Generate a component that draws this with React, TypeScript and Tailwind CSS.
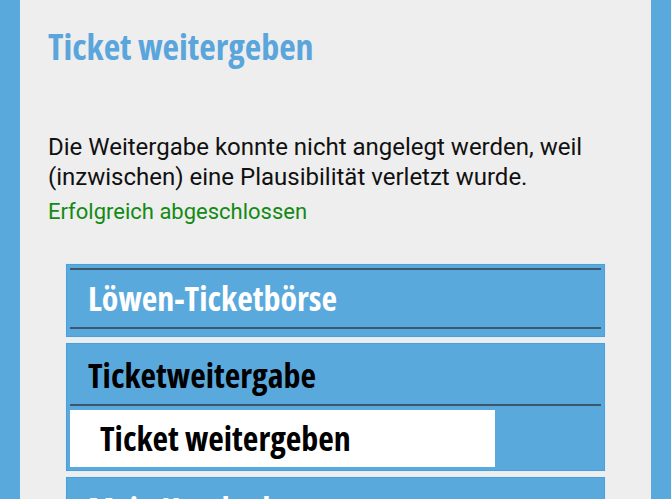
import React from "react";

const headFont = "font-['Open_Sans','DejaVu_Sans_Condensed',sans-serif] [font-stretch:75%] font-bold";

type MenuItem = {
  label: string;
  color: string;
  topLine?: boolean;
  children?: string[];
};

const menu: MenuItem[] = [
  { label: "Löwen-Ticketbörse", color: "text-white", topLine: true },
  { label: "Ticketweitergabe", color: "text-black", children: ["Ticket weitergeben"] },
  { label: "Mein Kundenkonto", color: "text-white" },
];

export default function App() {
  return (
    <div className="h-[499px] overflow-hidden bg-[#5aa9dd] px-5">
      <div className="h-full bg-[#eeeeee] pl-7 pr-7 pt-[27px]">
        <h1 className={`${headFont} text-[36px] leading-[40px] text-[#5aa5dc]`}>Ticket weitergeben</h1>

        <p className="mt-[65px] font-['Roboto',sans-serif] text-[24px] leading-[30px] text-[#111]">
          Die Weitergabe konnte nicht angelegt werden, weil (inzwischen) eine Plausibilität verletzt wurde.
        </p>
        <p className="mt-[7px] font-['Roboto',sans-serif] text-[22px] leading-[26px] text-[#138a13]">
          Erfolgreich abgeschlossen
        </p>

        <ul className="mx-[18px] mt-[39px] flex flex-col gap-[6px]">
          {menu.map((item) => (
            <li key={item.label} className="border border-[#4f9fd5] bg-[#5aa9dd] p-[3px] outline outline-1 outline-[#dfeef8]">
              <div className={`${item.topLine ? "border-t-2" : ""} border-b-2 border-[#3d566b] mb-1`}>
                <div className={`${headFont} ${item.color} flex h-[57px] items-center pl-[18px] text-[34px]`}>
                  {item.label}
                </div>
              </div>
              {item.children?.map((c) => (
                <div key={c} className={`${headFont} flex h-[57px] w-[425px] items-center bg-white pl-[30px] text-[34px] text-black`}>
                  {c}
                </div>
              ))}
            </li>
          ))}
        </ul>
      </div>
    </div>
  );
}
